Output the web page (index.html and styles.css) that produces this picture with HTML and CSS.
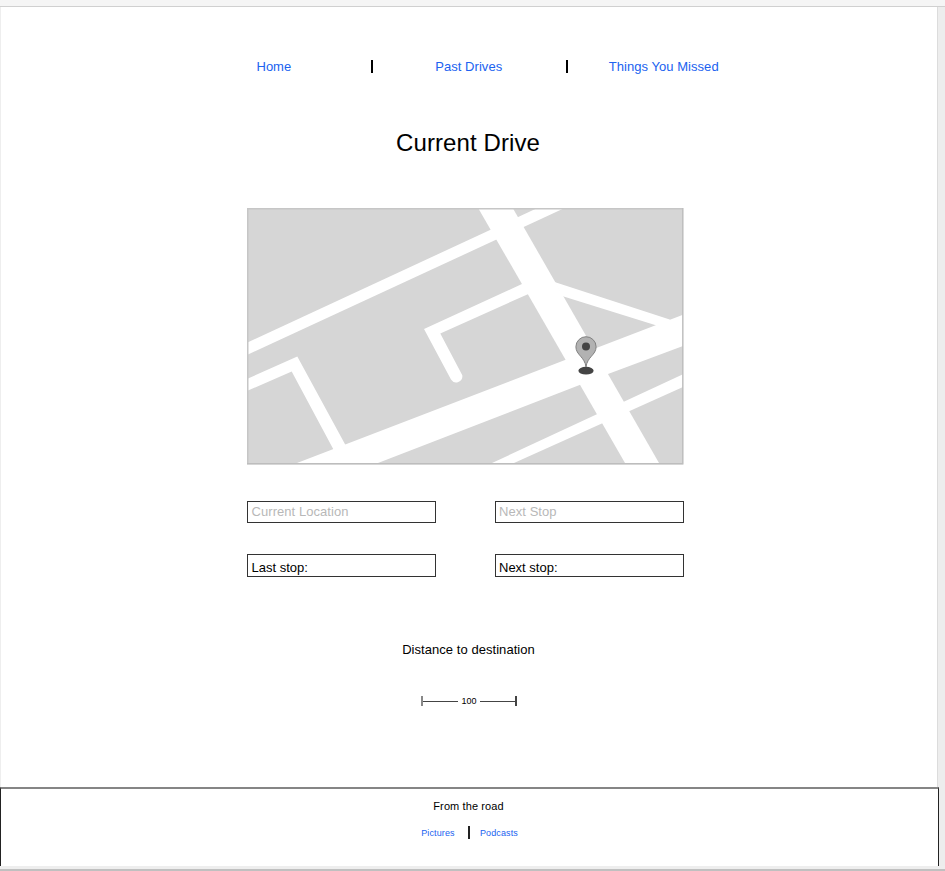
FILE: index.html
```html
<!DOCTYPE html>
<html lang="en">
<head>
<meta charset="utf-8">
<title>Current Drive</title>
<link rel="stylesheet" href="styles.css">
</head>
<body>
<div class="topbar"></div>
<div class="viewport">
  <div class="page">
    <main class="content">
      <nav class="nav">
        <a class="nav-home" href="#">Home</a>
        <span class="divider"></span>
        <a class="nav-past" href="#">Past Drives</a>
        <span class="divider"></span>
        <a class="nav-missed" href="#">Things You Missed</a>
      </nav>
      <h1 class="title">Current Drive</h1>
      <svg class="map" viewBox="247 208 437 257" role="img" aria-label="Map">
        <rect x="247" y="208" width="436.4" height="256.4" fill="#d6d6d6"/>
        <g fill="#fff">
          <path d="M248 342.3L535.3 209H562.5L248 354.5Z"/>
          <path d="M478.7 209H513.3L659 463H625Z"/>
          <path d="M248 378.5L297.3 356.5L346 446L334 450.5L291.7 371.5L248 390.5Z"/>
          <path d="M424 329L523 283.5L529 293.7L440.3 333.5L462.3 375.3A6.2 6.2 0 0 1 451 379.6Z"/>
          <path d="M554.5 282L669.7 319.5L675 330L655 325L562 296Z"/>
          <path d="M297 463L565 360L683 314.7V346L608 374L378 463Z"/>
          <path d="M492 463L683 374.3V387L514 463Z"/>
        </g>
        <path d="M247.75 464V208.75H683" fill="none" stroke="#c6c6c6" stroke-width="1.5"/>
        <path d="M682.75 208V463.75H247" fill="none" stroke="#bdbdbd" stroke-width="1.3"/>
        <ellipse cx="586" cy="370.7" rx="7.6" ry="3.9" fill="#444"/>
        <path d="M586 367C584.8 356.8 575.9 355 575.9 346.8A10.1 10.1 0 0 1 596.1 346.8C596.1 355 587.2 356.8 586 367Z" fill="#b2b2b2" stroke="#808080"/>
        <circle cx="586" cy="346.4" r="4" fill="#444"/>
      </svg>
      <div class="fields">
        <div class="field placeholder">Current Location</div>
        <div class="field placeholder">Next Stop</div>
        <div class="field value">Last stop:</div>
        <div class="field value">Next stop:</div>
      </div>
      <p class="distance-label">Distance to destination</p>
      <div class="scale"><i></i><span>100</span><i></i></div>
    </main>
    <footer class="footer">
      <p class="footer-title">From the road</p>
      <div class="footer-links">
        <a href="#">Pictures</a>
        <span class="divider-small"></span>
        <a href="#">Podcasts</a>
      </div>
    </footer>
  </div>
  <div class="gutter"></div>
</div>
<div class="bottombar"></div>
</body>
</html>
```
FILE: styles.css
```css
* { box-sizing: border-box; }
body {
  margin: 0;
  height: 871px;
  display: flex;
  flex-direction: column;
  overflow: hidden;
  background: #fff;
  color: #000;
  font: 13px/16px "Liberation Sans", Arial, sans-serif;
}
a { color: #2062f0; text-decoration: none; }
p, h1 { margin: 0; }
.topbar { height: 7px; background: #f5f5f5; border-bottom: 1px solid #d0d0d0; }
.viewport { display: flex; height: 859px; }
.page { width: 939px; display: flex; flex-direction: column; }
.gutter { flex: 1; background: #ededed; }
.bottombar { height: 5px; background: #eee; border-bottom: 2px solid #c0c0c0; }
.content {
  height: 780px;
  width: 938px;
  border-left: 1px solid #eee;
  border-right: 1px solid #dcdcdc;
  box-shadow: 1px 0 #ededed;
}
.nav {
  display: grid;
  grid-template-columns: 115px 2px 193px 2px 193px;
  align-items: center;
  margin: 51px 0 0 255px;
  height: 17px;
}
.divider { height: 13px; background: #000; }
.nav-home { padding-left: .5px; }
.nav-past, .nav-missed { text-align: center; padding-right: 1.5px; letter-spacing: .04px; }
.title { margin: 54px 0 0; padding-right: 2px; text-align: center; font-weight: 400; font-size: 24px; line-height: 28px; letter-spacing: .1px; }
.map { display: block; width: 437px; height: 257px; margin: 51px 0 0 246px; }
.fields {
  display: grid;
  grid-template-columns: 189px 189px;
  grid-template-rows: 22px 23px;
  gap: 31px 59px;
  margin: 36px 0 0 246px;
}
.field { border: 1px solid #333; padding-left: 3.5px; }
.field:nth-child(even) { padding-left: 3px; }
.placeholder { height: 22px; color: #b8b8b8; line-height: 20px; letter-spacing: .06px; }
.value { line-height: 25px; }
.distance-label { margin-top: 65px; padding-right: 1px; text-align: center; letter-spacing: .05px; }
.scale { display: flex; align-items: center; width: 96px; height: 10px; margin: 38px 0 0 420px; font-size: 9px; line-height: 10px; border-left: 2px solid #888; border-right: 2px solid #444; }
.scale span { width: 22px; text-align: center; }
.scale i { flex: 1; height: 1px; background: #444; }
.footer { height: 79px; border: 1px solid #222; border-top: 2px solid #858585; border-bottom: 0; text-align: center; }
.footer-title { margin-top: 10px; padding-right: 2px; font-size: 11px; line-height: 14px; letter-spacing: .1px; }
.footer-links { display: grid; grid-template-columns: 34px 2px 39px; column-gap: 12px; justify-content: start; align-items: center; margin: 12px 0 0 420px; font-size: 9px; line-height: 14px; letter-spacing: .12px; }
.footer-links a { padding-top: 1px; white-space: nowrap; }
.footer-links a:last-child { margin-left: -3px; }
.divider-small { height: 13px; margin: 0 -1px 0 1px; background: #222; }
```
